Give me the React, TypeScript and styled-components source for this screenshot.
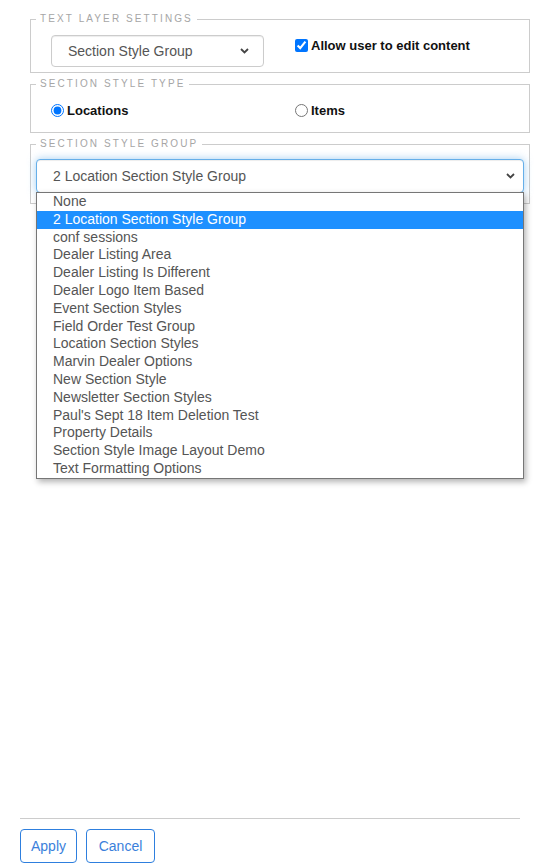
import React from 'react';
import styled, { createGlobalStyle, css } from 'styled-components';

const GlobalStyle = createGlobalStyle`
  html, body {
    margin: 0;
    padding: 0;
    background: #fff;
  }
  body {
    font-family: "Liberation Sans", Arial, sans-serif;
    font-size: 14px;
    color: #333;
  }
`;

interface SelectBoxI {
  focused?: boolean;
  width?: string;
}

const Page = styled.div`
  display: flex;
  flex-direction: column;
  min-height: 865px;
  box-sizing: border-box;
  padding: 13px 0 2px 20px;
  width: 520px;
`;

const Settings = styled.div`
  display: flex;
  flex-direction: column;
  gap: 5px;
  margin-left: 10px;
  width: 500px;
`;

const Fieldset = styled.fieldset`
  position: relative;
  margin: 0;
  padding: 0 5px 5px 5px;
  border: 1px solid #ccc;
  min-width: 0;
`;

const Legend = styled.legend`
  padding: 0 4px;
  font-size: 10px;
  line-height: 12px;
  letter-spacing: 2.1px;
  text-transform: uppercase;
  color: #a6a6a6;
`;

const Row = styled.div<{ top: number; bottom: number }>`
  display: grid;
  grid-template-columns: 244px 1fr;
  align-items: start;
  padding: ${({ top, bottom }) => `${top}px 0 ${bottom}px 15px`};
`;

const SelectBox = styled.div<SelectBoxI>`
  display: flex;
  align-items: center;
  justify-content: space-between;
  box-sizing: border-box;
  width: ${({ width }) => width || '100%'};
  height: 32px;
  padding: 0 14px 0 16px;
  border: 1px solid #ccc;
  border-radius: 4px;
  background: #fff;
  color: #555;
  font-size: 14px;
  box-shadow: inset 0 1px 1px rgba(0, 0, 0, .075);
  ${({ focused }) => (focused && css`
    height: 34px;
    padding-right: 8px;
    border-color: #66afe9;
    box-shadow: inset 0 1px 1px rgba(0, 0, 0, .075), 0 0 8px rgba(102, 175, 233, .6);
  `)}
`;

const Check = styled.label<{ shift?: number }>`
  display: flex;
  align-items: center;
  gap: 3px;
  margin-top: ${({ shift }) => shift || 0}px;
  font-size: 13px;
  font-weight: bold;
  color: #111;
  input {
    margin: 0;
    width: 13px;
    height: 13px;
    accent-color: #0075ff;
  }
`;

const GroupBody = styled.div`
  padding: 9px 0 5px 0;
`;

const OptionList = styled.ul`
  position: absolute;
  left: 5px;
  top: 42px;
  z-index: 2;
  width: 488px;
  box-sizing: border-box;
  margin: 0;
  padding: 0;
  list-style: none;
  background: #fff;
  border: 1px solid #767676;
  box-shadow: 2px 3px 6px rgba(0, 0, 0, .3);
`;

const Option = styled.li<{ selected?: boolean }>`
  height: 17.8px;
  line-height: 17.8px;
  padding-left: 16px;
  font-size: 14px;
  color: #555;
  white-space: nowrap;
  ${({ selected }) => (selected && css`
    background: #1e90ff;
    color: #fff;
  `)}
`;

const Footer = styled.div`
  margin-top: auto;
  width: 500px;
`;

const Divider = styled.hr`
  margin: 0 0 10px 0;
  border: 0;
  border-top: 1px solid #ccc;
`;

const Buttons = styled.div`
  display: flex;
  gap: 9px;
`;

const Button = styled.button<{ width: number }>`
  width: ${({ width }) => width}px;
  height: 34px;
  padding: 0;
  border: 1px solid #2e7fde;
  border-radius: 4px;
  background: #fff;
  color: #3b7fdb;
  font-family: "Liberation Sans", Arial, sans-serif;
  font-size: 14px;
`;

const Chevron = () => (
  <svg width="9" height="6" viewBox="0 0 9 6">
    <path d="M1 1l3.5 3.5L8 1" fill="none" stroke="#444" strokeWidth="1.8" />
  </svg>
);

const groups = [
  'None',
  '2 Location Section Style Group',
  'conf sessions',
  'Dealer Listing Area',
  'Dealer Listing Is Different',
  'Dealer Logo Item Based',
  'Event Section Styles',
  'Field Order Test Group',
  'Location Section Styles',
  'Marvin Dealer Options',
  'New Section Style',
  'Newsletter Section Styles',
  "Paul's Sept 18 Item Deletion Test",
  'Property Details',
  'Section Style Image Layout Demo',
  'Text Formatting Options',
];

export default function App() {
  return (
    <>
      <GlobalStyle />
      <Page>
        <Settings>
          <Fieldset>
            <Legend>Text Layer Settings</Legend>
            <Row top={10} bottom={0}>
              <SelectBox width="213px">
                <span>Section Style Group</span>
                <Chevron />
              </SelectBox>
              <Check shift={3}>
                <input type="checkbox" defaultChecked />
                Allow user to edit content
              </Check>
            </Row>
          </Fieldset>
          <Fieldset>
            <Legend>Section Style Type</Legend>
            <Row top={13} bottom={9}>
              <Check>
                <input type="radio" name="type" defaultChecked />
                Locations
              </Check>
              <Check>
                <input type="radio" name="type" />
                Items
              </Check>
            </Row>
          </Fieldset>
          <Fieldset>
            <Legend>Section Style Group</Legend>
            <GroupBody>
              <SelectBox focused>
                <span>2 Location Section Style Group</span>
                <Chevron />
              </SelectBox>
            </GroupBody>
            <OptionList>
              {groups.map((g, i) => (
                <Option key={g} selected={i === 1}>{g}</Option>
              ))}
            </OptionList>
          </Fieldset>
        </Settings>
        <Footer>
          <Divider />
          <Buttons>
            <Button width={57}>Apply</Button>
            <Button width={69}>Cancel</Button>
          </Buttons>
        </Footer>
      </Page>
    </>
  );
}
